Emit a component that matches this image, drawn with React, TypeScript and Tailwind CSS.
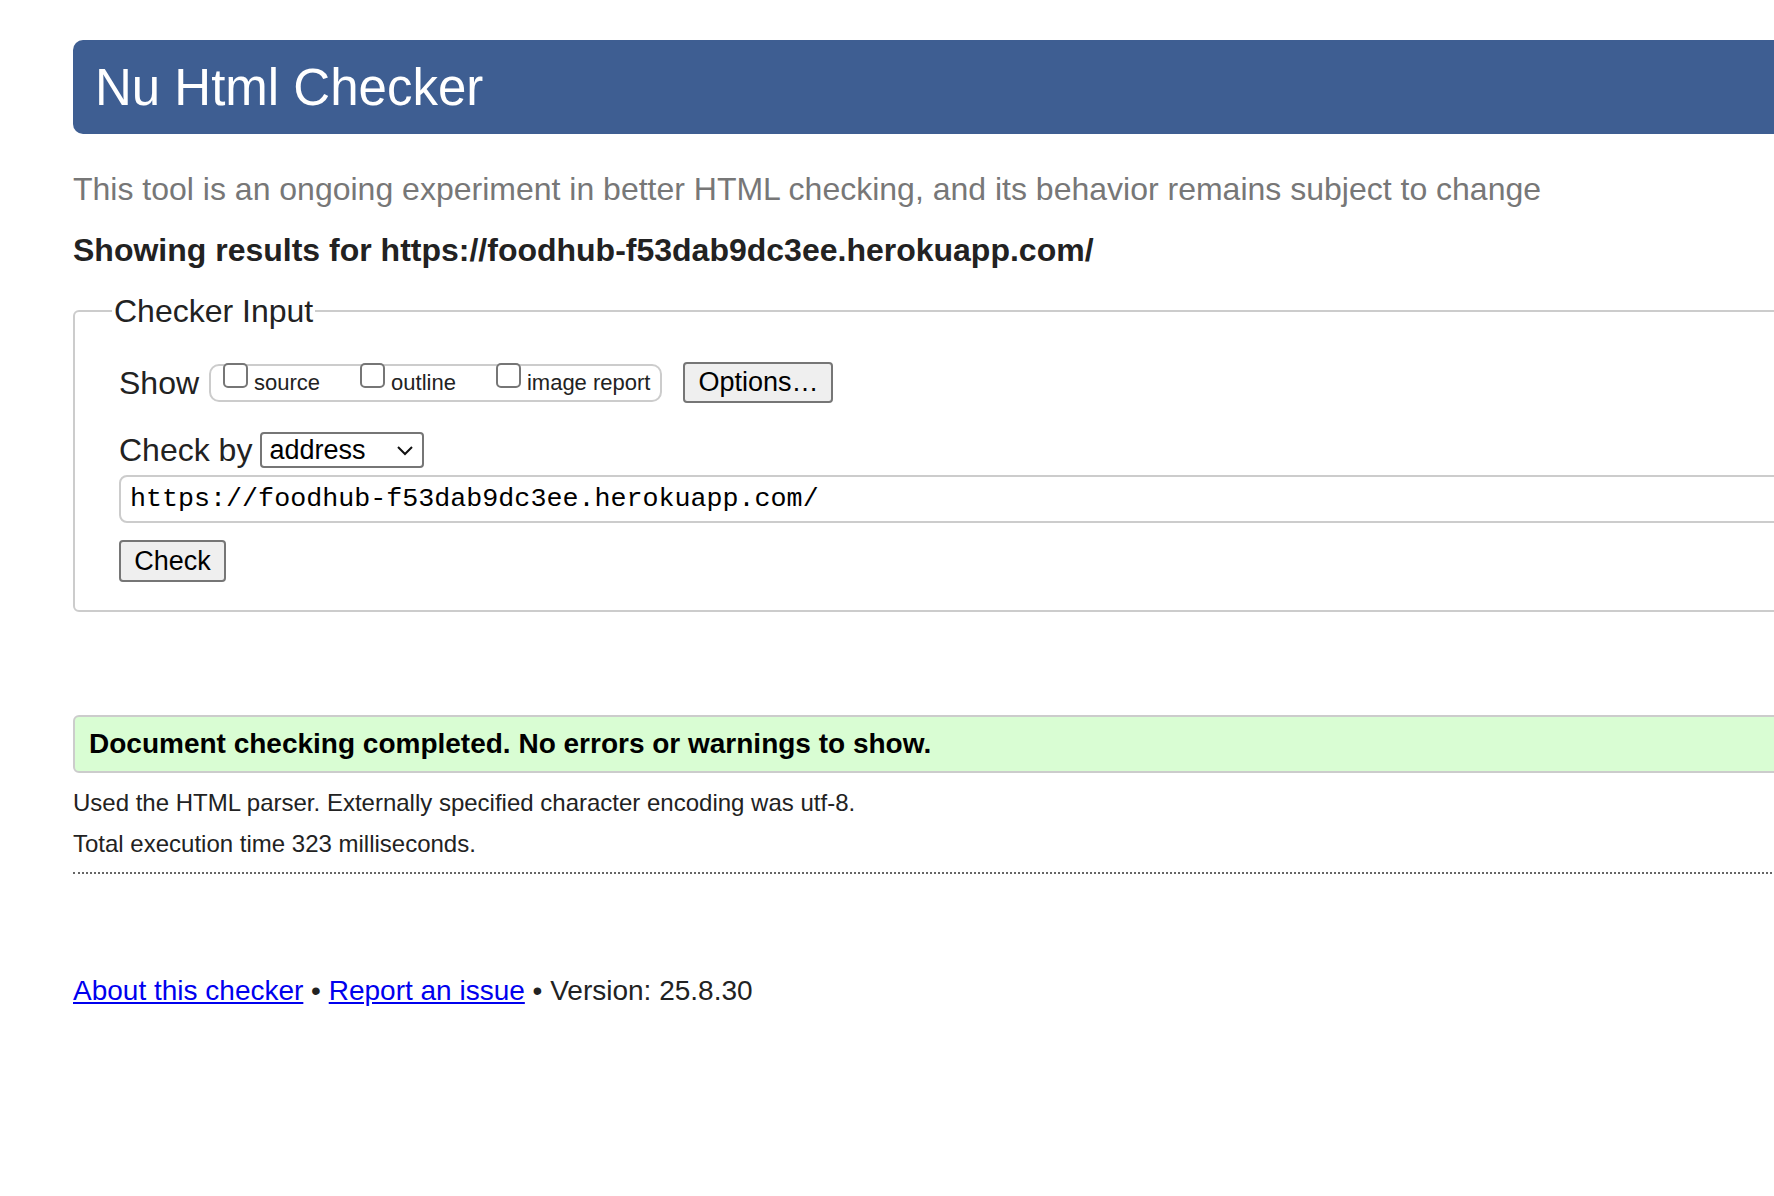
import React from 'react';

const Checkbox: React.FC<{ label: string }> = ({ label }) => (
  <label className="flex items-end gap-[6px]">
    <span className="mb-[6px] block h-[25px] w-[25px] rounded-[5px] border-2 border-[#767676] bg-white"></span>
    <span className="text-[22px] leading-none text-[#222]">{label}</span>
  </label>
);

const App: React.FC = () => {
  return (
    <div className="min-h-screen w-full overflow-hidden bg-white font-['Liberation_Sans',Arial,sans-serif] text-[#222]">
      <div className="w-[1900px] pl-[73px] pt-[40px]">
        {/* Header */}
        <h1 className="flex h-[94px] items-center rounded-[10px] bg-[#3e5e92] pl-[22px] text-[51px] leading-none text-white">
          Nu Html Checker
        </h1>

        <p className="mt-[36px] text-[32px] leading-[38px] text-[#777]">
          This tool is an ongoing experiment in better HTML checking, and its behavior remains subject to change
        </p>

        <p className="mt-[23px] text-[32px] font-bold leading-[38px] text-[#222]">
          Showing results for https://foodhub-f53dab9dc3ee.herokuapp.com/
        </p>

        {/* Checker input */}
        <fieldset className="mt-[23px] rounded-[6px] border-2 border-[#ccc] pb-[28px] pl-[44px] pr-[44px]">
          <legend className="-ml-[7px] px-[2px] text-[32px] leading-[38px] text-[#222]">Checker Input</legend>

          <div className="mt-[32px] flex h-[41px] items-center">
            <span className="text-[32px] leading-none">Show</span>
            <div className="ml-[10px] flex h-[38px] items-end gap-[40px] rounded-[10px] border-2 border-[#ccc] pb-[6px] pl-[12px] pr-[10px]">
              <Checkbox label="source" />
              <Checkbox label="outline" />
              <Checkbox label="image report" />
            </div>
            <button className="ml-[21px] flex h-[41px] w-[150px] items-center justify-center rounded-[4px] border-2 border-[#767676] bg-[#efefef] text-[27px] leading-none text-black">
              Options…
            </button>
          </div>

          <div className="mt-[29px] flex h-[36px] items-center">
            <span className="text-[32px] leading-none">Check by</span>
            <div className="ml-[8px] flex h-[36px] w-[164px] items-center justify-between rounded-[4px] border-2 border-[#767676] bg-white pl-[7px] pr-[8px]">
              <span className="text-[27px] leading-none text-black">address</span>
              <svg width="18" height="12" viewBox="0 0 18 12" fill="none">
                <path d="M2 3l7 7 7-7" stroke="#111" strokeWidth="2" />
              </svg>
            </div>
          </div>

          <div className="mt-[7px] flex h-[48px] items-center rounded-[8px] border-2 border-[#ccc] bg-white pl-[9px]">
            <span className="font-['Liberation_Mono','DejaVu_Sans_Mono',monospace] text-[26.7px] leading-none text-black">
              https://foodhub-f53dab9dc3ee.herokuapp.com/
            </span>
          </div>

          <button className="mt-[17px] flex h-[42px] w-[107px] items-center justify-center rounded-[4px] border-2 border-[#767676] bg-[#efefef] text-[27px] leading-none text-black">
            Check
          </button>
        </fieldset>

        {/* Result */}
        <div className="mt-[103px] flex h-[58px] items-center rounded-[6px] border-2 border-[#ccc] bg-[#d9fdd3] pl-[14px]">
          <span className="text-[28px] font-bold leading-none text-black">
            Document checking completed. No errors or warnings to show.
          </span>
        </div>

        <p className="mt-[16px] text-[24px] leading-[28px] text-[#222]">
          Used the HTML parser. Externally specified character encoding was utf-8.
        </p>
        <p className="mt-[13px] text-[24px] leading-[28px] text-[#222]">Total execution time 323 milliseconds.</p>

        <div className="mt-[14px] border-b-2 border-dotted border-[#666]"></div>

        {/* Footer */}
        <p className="mt-[100px] text-[28px] leading-[34px] text-[#222]">
          <a href="#" className="text-[#0000ee] underline">About this checker</a>
          {' • '}
          <a href="#" className="text-[#0000ee] underline">Report an issue</a>
          {' • Version: 25.8.30'}
        </p>
      </div>
    </div>
  );
};

export default App;
